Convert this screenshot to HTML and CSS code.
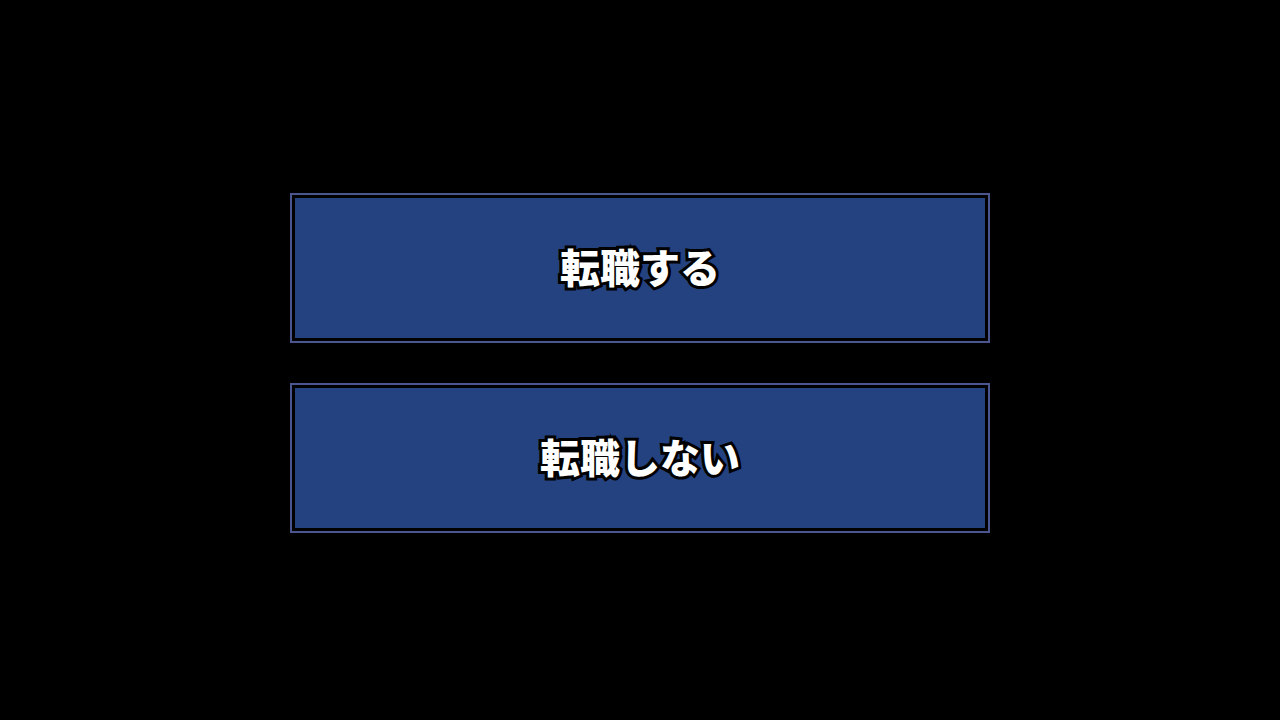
FILE: index.html
```html
<!DOCTYPE html>
<html lang="ja">
<head>
    <meta charset="UTF-8">
    <title>転職</title>
    <link rel="stylesheet" href="styles.css">
</head>
<body>
<div class="menu">
    <div class="choice"><span class="label">転職する</span></div>
    <div class="choice"><span class="label">転職しない</span></div>
</div>
</body>
</html>
```

FILE: styles.css
```css
html, body {
    margin: 0;
    height: 100%;
    background-color: #000;
}

.menu {
    display: flex;
    flex-direction: column;
    gap: 40px;
    width: 700px;
    padding: 193px 290px 0;
}

.choice {
    height: 140px;
    border: 2px solid #4b5590;
    padding: 3px;
    background-color: #000;
    display: flex;
}

.choice .label {
    flex: 1;
    display: flex;
    align-items: center;
    justify-content: center;
    padding-bottom: 5px;
    background-color: #24427f;
    color: #fff;
    font-family: "Noto Sans CJK JP", sans-serif;
    font-weight: 900;
    font-size: 40px;
    -webkit-text-stroke: 6px #000;
    paint-order: stroke fill;
}
```
